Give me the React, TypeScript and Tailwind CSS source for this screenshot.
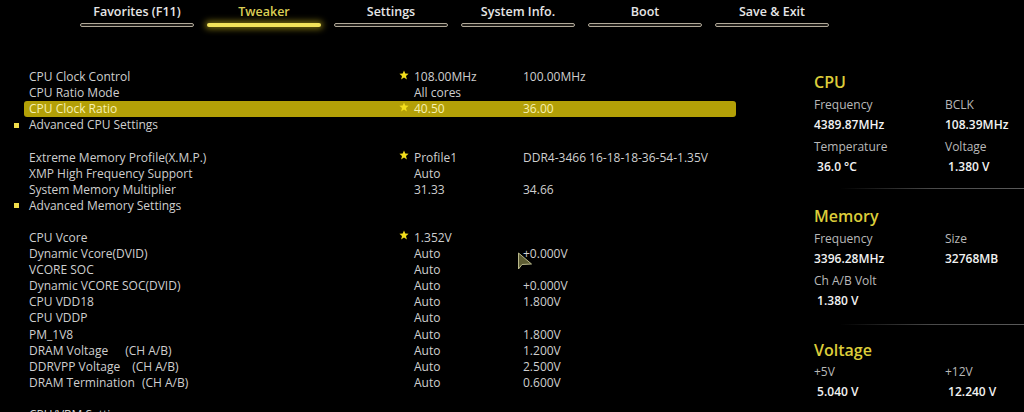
import React from 'react';

type Row = {
  label?: string;
  suffix?: string;
  gap?: string;
  bullet?: boolean;
  star?: boolean;
  v1?: string;
  v2?: string;
  active?: boolean;
};

const ROWS: Row[] = [
  { label: 'CPU Clock Control', star: true, v1: '108.00MHz', v2: '100.00MHz' },
  { label: 'CPU Ratio Mode', v1: 'All cores' },
  { label: 'CPU Clock Ratio', star: true, v1: '40.50', v2: '36.00', active: true },
  { label: 'Advanced CPU Settings', bullet: true },
  {},
  { label: 'Extreme Memory Profile(X.M.P.)', star: true, v1: 'Profile1', v2: 'DDR4-3466 16-18-18-36-54-1.35V' },
  { label: 'XMP High Frequency Support', v1: 'Auto' },
  { label: 'System Memory Multiplier', v1: '31.33', v2: '34.66' },
  { label: 'Advanced Memory Settings', bullet: true },
  {},
  { label: 'CPU Vcore', star: true, v1: '1.352V' },
  { label: 'Dynamic Vcore(DVID)', v1: 'Auto', v2: '+0.000V' },
  { label: 'VCORE SOC', v1: 'Auto' },
  { label: 'Dynamic VCORE SOC(DVID)', v1: 'Auto', v2: '+0.000V' },
  { label: 'CPU VDD18', v1: 'Auto', v2: '1.800V' },
  { label: 'CPU VDDP', v1: 'Auto' },
  { label: 'PM_1V8', v1: 'Auto', v2: '1.800V' },
  { label: 'DRAM Voltage', suffix: '(CH A/B)', gap: 'ml-[17px]', v1: 'Auto', v2: '1.200V' },
  { label: 'DDRVPP Voltage', suffix: '(CH A/B)', gap: 'ml-[12px]', v1: 'Auto', v2: '2.500V' },
  { label: 'DRAM Termination', suffix: '(CH A/B)', gap: 'ml-[7px]', v1: 'Auto', v2: '0.600V' },
  {},
  { label: 'CPU/VRM Settings' },
];

const TABS = ['Favorites (F11)', 'Tweaker', 'Settings', 'System Info.', 'Boot', 'Save & Exit'];

function Star() {
  return (
    <svg width="10" height="10" viewBox="0 0 10 10" className="-mt-[5px]">
      <path d="M5 0.5 L6.3 3.6 L9.6 3.8 L7 6 L7.9 9.4 L5 7.5 L2.1 9.4 L3 6 L0.4 3.8 L3.7 3.6 Z" fill="#f2de1c" />
    </svg>
  );
}

function Cursor() {
  return (
    <svg width="16" height="20" viewBox="0 0 16 20" className="absolute left-[517px] top-[252px]">
      <path d="M1.5 1 L1.5 17 L5 12.5 L14.5 12 Z" fill="#5d5c33" stroke="#b9b88a" strokeWidth="1" strokeLinejoin="round" />
    </svg>
  );
}

function InfoPair({ a, b, bold }: { a: string; b?: string; bold?: boolean }) {
  return (
    <div className={`flex h-5 items-center whitespace-pre ${bold ? 'text-[#f2f2f2] font-semibold' : 'text-[#b9b9b9]'}`}>
      <span className="w-[131px]">{a}</span>
      {b && <span>{b}</span>}
    </div>
  );
}

function Divider({ className }: { className: string }) {
  return <div className={`h-px ml-[26px] bg-gradient-to-r from-transparent via-[#4a4a4a] to-[#5a5a5a] ${className}`} />;
}

export default function App() {
  return (
    <div
      className="relative w-[1024px] h-[412px] overflow-hidden bg-black text-[12px]"
      style={{ fontFamily: '"Open Sans", "Noto Sans", sans-serif' }}
    >
      {/* tab bar */}
      <div className="flex h-[30px] pl-[80px] gap-[13px]">
        {TABS.map(t => {
          const on = t === 'Tweaker';
          return (
            <div key={t} className="w-[114px] flex flex-col items-center">
              <div className={`h-[23px] leading-[23px] text-[12.5px] font-semibold ${on ? 'text-[#dccf55]' : 'text-[#e6e6e6]'}`}>
                {t}
              </div>
              {on ? (
                <div className="w-full h-[4px] rounded-full bg-[#f2e25a] shadow-[0_0_6px_2px_rgba(200,180,30,0.6)]" />
              ) : (
                <div className="w-full h-[4px] rounded-full border border-[#b0a898] bg-[#1e1b17]" />
              )}
            </div>
          );
        })}
      </div>

      <div className="flex">
        {/* settings list */}
        <div className="w-[800px] pt-[39px] text-[#cfcfcf]">
          {ROWS.map((r, i) => (
            <div key={i} className="flex h-[16.1px] items-center">
              <div className="w-[24px] flex justify-end pr-[5px]">
                {r.bullet && <div className="w-[5px] h-[5px] bg-[#f0dc4a]" />}
              </div>
              <div
                className={`flex items-center w-[712px] h-4 rounded-[3px] ${
                  r.active ? 'bg-[#b3a007] text-[#f7f1b0]' : ''
                }`}
              >
                <div className="w-[375px] pl-[5px] whitespace-nowrap">
                  {r.label}
                  {r.suffix && <span className={r.gap}>{r.suffix}</span>}
                </div>
                <div className="w-[15px] flex justify-start">{r.star && <Star />}</div>
                <div className="w-[109px]">{r.v1}</div>
                <div>{r.v2}</div>
              </div>
            </div>
          ))}
        </div>

        {/* hardware monitor */}
        <div className="w-[224px] pl-[14px] pt-[42px] text-[12px]">
          <div className="h-5 leading-5 text-[16px] font-semibold text-[#dccd3a]">CPU</div>
          <div className="mt-[3px]">
            <InfoPair a="Frequency" b="BCLK" />
            <InfoPair a="4389.87MHz" b="108.39MHz" bold />
            <div className="mt-[2px]" />
            <InfoPair a="Temperature" b="Voltage" />
            <InfoPair a=" 36.0 °C" b=" 1.380 V" bold />
          </div>
          <Divider className="mt-[11px]" />

          <div className="mt-[17px] h-5 leading-5 text-[16px] font-semibold text-[#dccd3a]">Memory</div>
          <div className="mt-[3px]">
            <InfoPair a="Frequency" b="Size" />
            <InfoPair a="3396.28MHz" b="32768MB" bold />
            <div className="mt-[2px]" />
            <InfoPair a="Ch A/B Volt" />
            <InfoPair a=" 1.380 V" bold />
          </div>
          <Divider className="mt-[13px]" />

          <div className="mt-[15px] h-5 leading-5 text-[16px] font-semibold text-[#dccd3a]">Voltage</div>
          <div className="mt-[2px]">
            <InfoPair a="+5V" b="+12V" />
            <InfoPair a=" 5.040 V" b=" 12.240 V" bold />
          </div>
        </div>
      </div>

      <Cursor />
    </div>
  );
}
